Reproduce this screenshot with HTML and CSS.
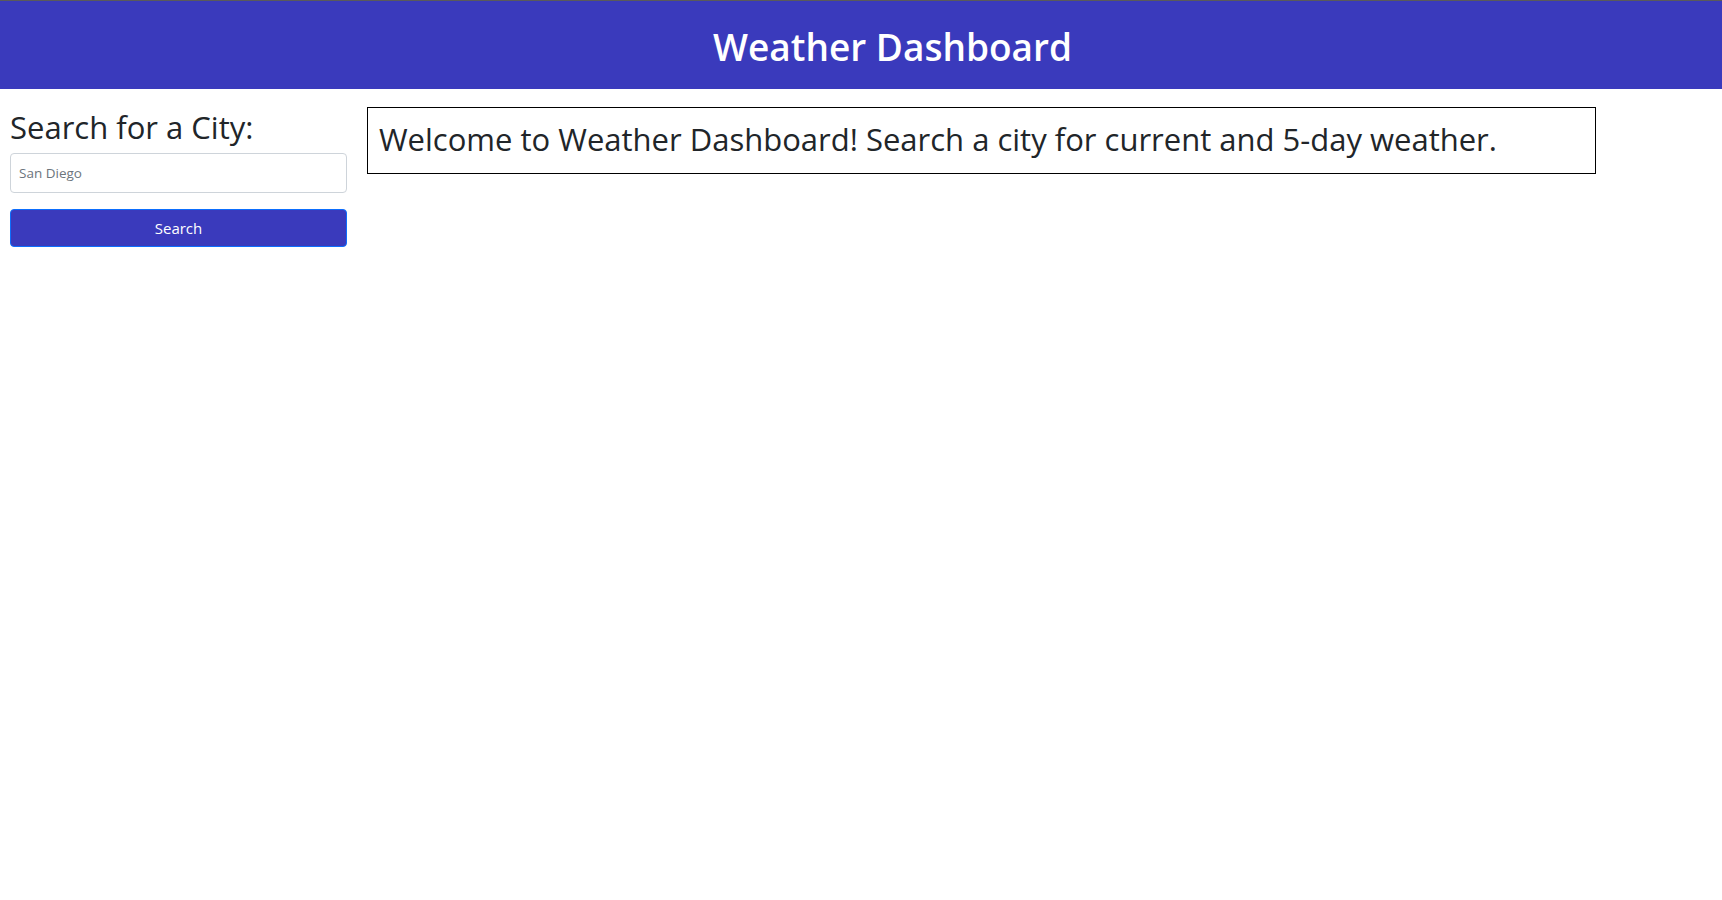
FILE: index.html
```html
<!DOCTYPE html>
<html lang="en">
<head>
<meta charset="utf-8">
<title>Weather Dashboard</title>
<link rel="stylesheet" href="styles.css">
</head>
<body>
<header class="site-header">
  <h1 class="site-title">Weather Dashboard</h1>
</header>
<main class="layout">
  <aside class="search-panel">
    <h2 class="search-title">Search for a City:</h2>
    <input class="city-input" type="text" placeholder="San Diego">
    <button class="search-btn" type="button">Search</button>
  </aside>
  <section class="content">
    <div class="welcome-box">
      <h2 class="welcome-text">Welcome to Weather Dashboard! Search a city for current and 5-day weather.</h2>
    </div>
  </section>
</main>
</body>
</html>
```

FILE: styles.css
```css
* { box-sizing: border-box; }
html, body { margin: 0; padding: 0; }
body {
  font-family: "Open Sans", "Noto Sans", sans-serif;
  color: #212529;
  background: #fff;
  border-top: 1px solid #5a5a5a;
}
.site-header {
  background: #3a3abc;
  height: 88px;
  display: flex;
  align-items: center;
  justify-content: center;
  padding: 5px 0 0 63px;
}
.site-title {
  margin: 0;
  color: #fff;
  font-size: 37px;
  font-weight: 600;
  line-height: 1.2;
}
.layout {
  display: flex;
  align-items: flex-start;
  padding: 0 10px;
  gap: 20px;
}
.search-panel {
  width: 337px;
  flex: none;
  display: flex;
  flex-direction: column;
  padding-top: 20px;
}
.search-title {
  margin: 0 0 7px 0;
  font-size: 31px;
  font-weight: 400;
  line-height: 1.2;
}
.city-input {
  height: 40px;
  border: 1px solid #ced4da;
  border-radius: 4px;
  padding: 0 8px;
  font-family: inherit;
  font-size: 13.5px;
  color: #212529;
}
.city-input::placeholder { color: #6c757d; }
.search-btn {
  margin-top: 16px;
  height: 38px;
  background: #3a3abc;
  border: 1px solid #0d6efd;
  border-radius: 4px;
  color: #fff;
  font-family: inherit;
  font-size: 15px;
}
.content {
  padding-top: 18px;
}
.welcome-box {
  width: 1229px;
  height: 67px;
  border: 1px solid #000;
  padding: 0 11px 1px;
  display: flex;
  align-items: center;
}
.welcome-text {
  margin: 0;
  font-size: 31px;
  font-weight: 400;
  line-height: 1.2;
}
```
